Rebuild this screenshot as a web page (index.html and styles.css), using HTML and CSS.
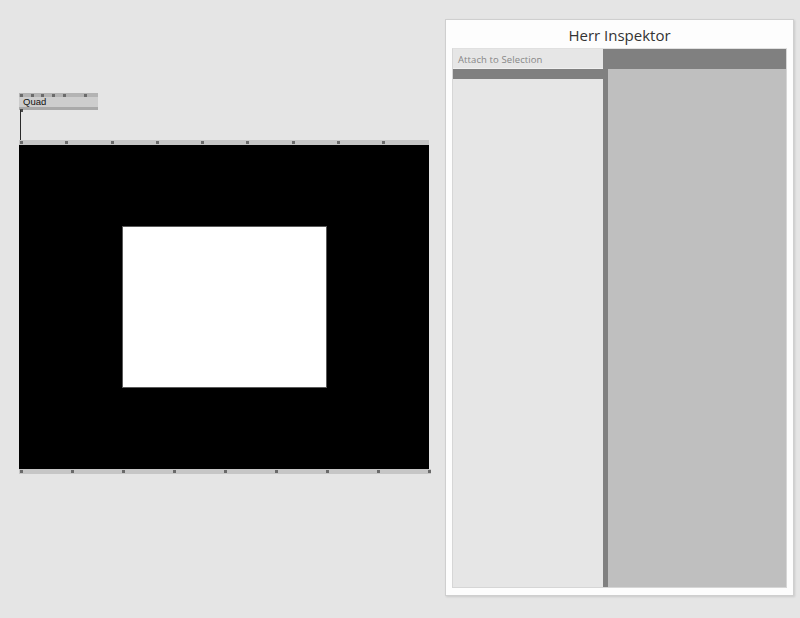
FILE: index.html
```html
<!DOCTYPE html>
<html>
<head>
<meta charset="utf-8">
<link rel="stylesheet" href="styles.css">
</head>
<body>
<div class="patch">
  <div class="node quad">
    <div class="pins-top">
      <span class="pin"></span><span class="pin"></span><span class="pin"></span><span class="pin"></span><span class="pin"></span><span class="pin pin-far"></span>
    </div>
    <div class="node-label">Quad</div>
    <div class="pins-bottom"><span class="pin"></span></div>
  </div>
  <div class="link"></div>
  <div class="node renderer">
    <div class="strip strip-top">
      <span class="pin"></span><span class="pin"></span><span class="pin"></span><span class="pin"></span><span class="pin"></span><span class="pin"></span><span class="pin"></span><span class="pin"></span><span class="pin"></span>
    </div>
    <div class="view">
      <div class="quad-shape"></div>
    </div>
    <div class="strip strip-bottom">
      <span class="pin"></span><span class="pin"></span><span class="pin"></span><span class="pin"></span><span class="pin"></span><span class="pin"></span><span class="pin"></span><span class="pin"></span><span class="pin"></span>
    </div>
  </div>
</div>

<div class="inspector">
  <div class="title">Herr Inspektor</div>
  <div class="panes">
    <div class="left-pane">
      <div class="attach">Attach to Selection</div>
      <div class="left-bar"></div>
      <div class="left-body"></div>
    </div>
    <div class="right-pane">
      <div class="right-body"></div>
    </div>
  </div>
</div>
</body>
</html>
```

FILE: styles.css
```css
html, body {
  margin: 0;
  padding: 0;
}
body {
  width: 800px;
  height: 618px;
  background: #e5e5e5;
  position: relative;
  overflow: hidden;
  font-family: "Open Sans", "DejaVu Sans", sans-serif;
}

.patch {
  position: absolute;
  left: 0;
  top: 0;
  width: 440px;
  height: 618px;
}

.node {
  position: absolute;
}

.pin {
  display: block;
  width: 3px;
  height: 3px;
  background: #6a6a6a;
  flex: none;
}

/* Quad node */
.quad {
  left: 19px;
  top: 93px;
  width: 79px;
}
.pins-top {
  height: 4px;
  background: #b3b3b3;
  display: flex;
  align-items: center;
  gap: 7.7px;
  padding-left: 1px;
}
.pin-far {
  margin-left: 11px;
}
.node-label {
  height: 10px;
  background: #cdcdcd;
  font-family: "Liberation Sans", Arial, sans-serif;
  font-size: 9.5px;
  line-height: 10px;
  color: #111;
  padding-left: 4px;
}
.pins-bottom {
  height: 3px;
  background: #a9a9a9;
  display: flex;
  align-items: flex-end;
  padding-left: 1px;
}
.pins-bottom .pin {
  margin-bottom: -2px;
  background: #4a4a4a;
}

.link {
  position: absolute;
  left: 20px;
  top: 110px;
  width: 1px;
  height: 30px;
  background: #2a2a2a;
}

/* Renderer node */
.renderer {
  left: 19px;
  top: 140px;
  width: 410px;
}
.strip {
  height: 5px;
  background: #c6c6c6;
  display: flex;
  align-items: center;
}
.strip-top {
  gap: 42.25px;
  padding-left: 1px;
}
.strip-bottom {
  justify-content: space-between;
  padding: 0 0 0 0.5px;
  width: 411px;
}
.view {
  height: 324px;
  background: #000;
  padding: 81px 0 0 103px;
  box-sizing: border-box;
}
.quad-shape {
  width: 205px;
  height: 162px;
  background: #fff;
  box-sizing: border-box;
  border: 1px solid #5a5a5a;
}

/* Inspector window */
.inspector {
  position: absolute;
  left: 445px;
  top: 19px;
  width: 349px;
  height: 577px;
  box-sizing: border-box;
  background: #fdfdfd;
  border: 1px solid #cfcfcf;
  box-shadow: 1px 1px 2px rgba(0,0,0,0.12);
  padding: 0 6px 7px 6px;
  display: flex;
  flex-direction: column;
}
.title {
  height: 28px;
  text-align: center;
  font-family: "Open Sans", sans-serif;
  font-size: 15px;
  line-height: 30px;
  color: #333;
}
.panes {
  flex: 1;
  display: flex;
  border: 1px solid #d6d6d6;
  border-top-color: #e0e0e0;
}
.left-pane {
  width: 150px;
  display: flex;
  flex-direction: column;
  background: #e6e6e6;
}
.attach {
  height: 20px;
  box-sizing: border-box;
  border-bottom: 1px solid #f0f0f0;
  font-family: "Open Sans", sans-serif;
  font-size: 9.5px;
  line-height: 21px;
  color: #868686;
  padding-left: 5px;
  letter-spacing: 0.1px;
}
.left-bar {
  height: 10px;
  background: #808080;
}
.left-body {
  flex: 1;
  background: #e6e6e6;
}
.right-pane {
  flex: 1;
  background: #808080;
  display: flex;
  padding: 20px 0 0 5px;
}
.right-body {
  flex: 1;
  background: #bfbfbf;
}
```
